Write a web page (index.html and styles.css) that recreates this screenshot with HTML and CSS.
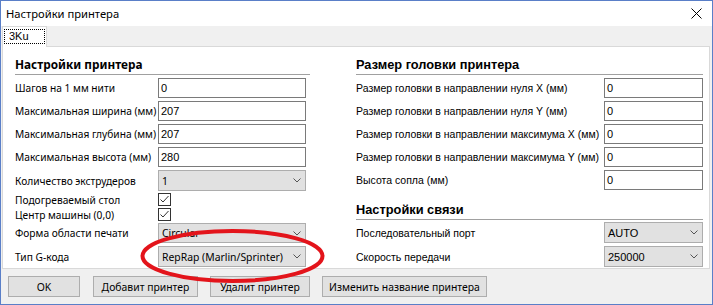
FILE: index.html
```html
<!DOCTYPE html>
<html>
<head>
<meta charset="utf-8">
<link rel="stylesheet" href="styles.css">
</head>
<body>
<div class="window">
  <div class="titlebar">
    <span class="title">Настройки принтера</span>
    <svg class="close" width="11" height="11" viewBox="0 0 11 11"><path d="M0.5 0.5 L10.5 10.5 M10.5 0.5 L0.5 10.5" stroke="#000" stroke-width="1" fill="none"/></svg>
  </div>
  <div class="tabstrip">
    <div class="tab"><span class="focus">3Ku</span></div>
  </div>
  <div class="panel">
    <div class="col col-left">
      <div class="heading">Настройки принтера</div>
      <div class="row r-first"><span class="lbl">Шагов на 1 мм нити</span><div class="input">0</div></div>
      <div class="row"><span class="lbl">Максимальная ширина (мм)</span><div class="input">207</div></div>
      <div class="row"><span class="lbl">Максимальная глубина (мм)</span><div class="input">207</div></div>
      <div class="row"><span class="lbl">Максимальная высота (мм)</span><div class="input">280</div></div>
      <div class="row tall"><span class="lbl">Количество экструдеров</span><div class="combo"><span>1</span><svg class="chev" width="8" height="5" viewBox="0 0 8 5"><path d="M0.5 0.5 L4 4 L7.5 0.5" stroke="#555" fill="none"/></svg></div></div>
      <div class="row check-row"><span class="lbl">Подогреваемый стол</span><div class="check"><svg width="11" height="11" viewBox="0 0 11 11"><path d="M1.5 5.5 L4 8 L9.5 2" stroke="#333" stroke-width="1" fill="none"/></svg></div></div>
      <div class="row check-row"><span class="lbl">Центр машины (0,0)</span><div class="check"><svg width="11" height="11" viewBox="0 0 11 11"><path d="M1.5 5.5 L4 8 L9.5 2" stroke="#333" stroke-width="1" fill="none"/></svg></div></div>
      <div class="row g2"><span class="lbl">Форма области печати</span><div class="combo"><span>Circular</span><svg class="chev" width="8" height="5" viewBox="0 0 8 5"><path d="M0.5 0.5 L4 4 L7.5 0.5" stroke="#555" fill="none"/></svg></div></div>
      <div class="row tall"><span class="lbl">Тип G-кода</span><div class="combo"><span>RepRap (Marlin/Sprinter)</span><svg class="chev" width="8" height="5" viewBox="0 0 8 5"><path d="M0.5 0.5 L4 4 L7.5 0.5" stroke="#555" fill="none"/></svg></div></div>
    </div>
    <div class="col col-right">
      <div class="heading heading-t">Размер головки принтера</div>
      <div class="row r-first"><span class="lbl">Размер головки в направлении нуля X (мм)</span><div class="input">0</div></div>
      <div class="row"><span class="lbl">Размер головки в направлении нуля Y (мм)</span><div class="input">0</div></div>
      <div class="row"><span class="lbl">Размер головки в направлении максимума X (мм)</span><div class="input">0</div></div>
      <div class="row"><span class="lbl">Размер головки в направлении максимума Y (мм)</span><div class="input">0</div></div>
      <div class="row"><span class="lbl">Высота сопла (мм)</span><div class="input">0</div></div>
      <div class="heading heading-t heading2">Настройки связи</div>
      <div class="row tall g2"><span class="lbl">Последовательный порт</span><div class="combo"><span>AUTO</span><svg class="chev" width="8" height="5" viewBox="0 0 8 5"><path d="M0.5 0.5 L4 4 L7.5 0.5" stroke="#555" fill="none"/></svg></div></div>
      <div class="row tall"><span class="lbl">Скорость передачи</span><div class="combo"><span>250000</span><svg class="chev" width="8" height="5" viewBox="0 0 8 5"><path d="M0.5 0.5 L4 4 L7.5 0.5" stroke="#555" fill="none"/></svg></div></div>
    </div>
  </div>
  <div class="buttons">
    <div class="btn b-ok">OK</div>
    <div class="btn b-add">Добавит принтер</div>
    <div class="btn b-del">Удалит принтер</div>
    <div class="btn b-ren">Изменить название принтера</div>
  </div>
  <svg class="mark" width="713" height="305" viewBox="0 0 713 305"><ellipse cx="232.5" cy="256" rx="90" ry="25" stroke="#e3141b" stroke-width="4" fill="none"/></svg>
</div>
</body>
</html>
```
FILE: styles.css
```css
* { box-sizing: border-box; }
body { margin: 0; background: #fff; }
.window {
  width: 713px; height: 305px;
  border: 1px solid #5a7fc8;
  background: #f0f0f0;
  display: flex; flex-direction: column;
  position: relative;
  font-family: "Noto Sans", sans-serif;
  font-size: 10.4px; color: #000;
  white-space: nowrap;
}
.titlebar {
  height: 25px; background: #fff;
  display: flex; align-items: center; justify-content: space-between;
  padding-left: 5px; padding-right: 10px;
}
.title { font-size: 11.2px; line-height: 15px; }
.close { display: block; }
.tabstrip { height: 20px; display: flex; padding-left: 1px; }
.tab {
  width: 45px; height: 21px;
  background: #fff;
  border: 1px solid #d9d9d9; border-bottom: none;
  position: relative; z-index: 1;
  display: flex; align-items: flex-start; padding: 2px 0 0 1px;
}
.focus {
  display: block; width: 41px; height: 15px;
  border: 1px dotted #000;
  font-family: "Liberation Sans", sans-serif; font-size: 11px; line-height: 13px;
  padding-left: 4px;
}
.panel {
  margin-left: 1px; width: 708px; height: 223px;
  background: #fff; border: 1px solid #d9d9d9;
  display: flex; padding-left: 12px;
}
.col { display: flex; flex-direction: column; }
.col-left { width: 295px; }
.col-right { width: 347px; margin-left: 46px; }
.heading {
  height: 28px; border-bottom: 1px solid #a0a0a0;
  display: flex; align-items: flex-end; padding-bottom: 2px;
  font-weight: bold; font-size: 11.8px; line-height: 15px;
}
.heading2 { height: 30px; }
.heading-t { font-family: "Liberation Sans", sans-serif; font-size: 12.8px; }
.row { display: flex; align-items: center; height: 20px; margin-top: 3px; }
.r-first { margin-top: 3px; }
.tall { height: 21px; }
.g2 { margin-top: 2px; }
.check-row { height: 13px; margin-top: 2px; }
.lbl { white-space: nowrap; }
.col-left .lbl { width: 143px; font-size: 10.2px; }
.col-right .lbl { width: 248px; font-family: "Liberation Sans", sans-serif; font-size: 10.5px; }
.input {
  height: 20px; border: 1px solid #7a7a7a; background: #fff;
  padding-left: 2px; line-height: 18px;
  font-family: "Liberation Sans", sans-serif; font-size: 11px;
}
.col-left .input, .col-left .combo { width: 148px; }
.col-right .input, .col-right .combo { width: 99px; }
.combo {
  height: 100%; background: #e1e1e1; border: 1px solid #adadad;
  display: flex; align-items: center; justify-content: space-between;
  padding: 0 4px 0 3px;
}
.col-right .combo { font-family: "Liberation Sans", sans-serif; font-size: 11px; padding-left: 3px; }
.chev { display: block; }
.check {
  width: 13px; height: 13px; border: 1px solid #333; background: #fff;
}
.check svg { display: block; }
.buttons { display: flex; padding: 7px 0 0 7px; }
.btn {
  height: 21px; background: #e1e1e1; border: 1px solid #adadad;
  display: flex; align-items: center; justify-content: center;
  margin-right: 12px;
}
.b-ok { width: 72px; margin-right: 13px; }
.b-add { width: 105px; }
.b-del { width: 100px; }
.b-ren { width: 165px; }
.mark { position: absolute; left: -1px; top: -1px; pointer-events: none; }
```
